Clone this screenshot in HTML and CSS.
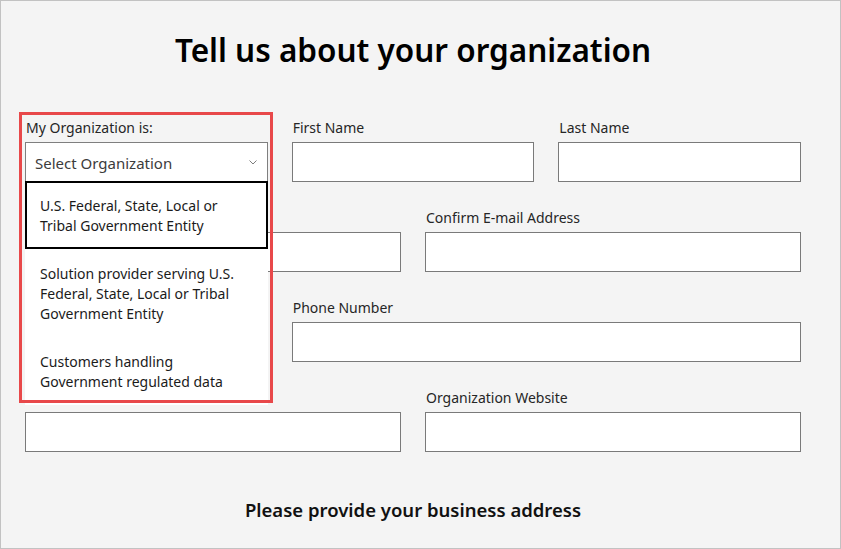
FILE: index.html
```html
<!DOCTYPE html>
<html lang="en">
<head>
<meta charset="utf-8">
<title>Tell us about your organization</title>
<link rel="stylesheet" href="styles.css">
</head>
<body>
<div class="page">
  <div class="form">
    <h1 class="title">Tell us about your organization</h1>
    <div class="grid">
      <div class="field span2 org-field">
        <label class="label">My Organization is:</label>
        <div class="select">
          <span class="select-text">Select Organization</span>
          <svg class="chev" width="8" height="5" viewBox="0 0 8 5"><polyline points="0.5,0.5 4,4 7.5,0.5" fill="none" stroke="#7d7d7d" stroke-width="1"/></svg>
        </div>
        <ul class="menu">
          <li class="item active">U.S. Federal, State, Local or Tribal Government Entity</li>
          <li class="item">Solution provider serving U.S. Federal, State, Local or Tribal Government Entity</li>
          <li class="item">Customers handling Government regulated data</li>
        </ul>
        <div class="highlight"></div>
      </div>
      <div class="field span2">
        <label class="label">First Name</label>
        <div class="input"></div>
      </div>
      <div class="field span2">
        <label class="label">Last Name</label>
        <div class="input"></div>
      </div>

      <div class="field span3">
        <span class="label"></span>
        <div class="input"></div>
      </div>
      <div class="field span3">
        <label class="label">Confirm E-mail Address</label>
        <div class="input"></div>
      </div>

      <div class="field span2">
        <span class="label"></span>
        <div class="input"></div>
      </div>
      <div class="field span4">
        <label class="label">Phone Number</label>
        <div class="input"></div>
      </div>

      <div class="field span3">
        <span class="label"></span>
        <div class="input"></div>
      </div>
      <div class="field span3">
        <label class="label">Organization Website</label>
        <div class="input"></div>
      </div>
    </div>
    <h2 class="subtitle">Please provide your business address</h2>
  </div>
</div>
</body>
</html>
```

FILE: styles.css
```css
* { box-sizing: border-box; }
html, body { margin: 0; padding: 0; }
body {
  font-family: "Noto Sans", "Open Sans", sans-serif;
  color: #1b1b1b;
  background: #f4f4f4;
}
.page {
  width: 841px;
  height: 549px;
  border: 1px solid #c2c2c2;
  background: #f4f4f4;
  padding: 29px 0 0 24px;
  overflow: hidden;
}
.form {
  width: 776px;
}
.title {
  margin: 0;
  text-align: center;
  font-size: 31.5px;
  line-height: 40px;
  font-weight: 600;
  color: #000;
}
.grid {
  margin-top: 48px;
  display: grid;
  grid-template-columns: repeat(6, 1fr);
  column-gap: 24px;
  row-gap: 26px;
}
.field {
  display: flex;
  flex-direction: column;
  gap: 4px;
}
.span2 { grid-column: span 2; }
.span3 { grid-column: span 3; }
.span4 { grid-column: span 4; }
.label {
  display: block;
  height: 20px;
  font-size: 14px;
  line-height: 20px;
  padding-left: 1px;
  color: #262626;
}
.input {
  height: 40px;
  background: #fff;
  border: 1px solid #7a7a7a;
}
.org-field { position: relative; }
.select {
  height: 40px;
  background: #fff;
  border: 1px solid #7f7f7f;
  display: flex;
  align-items: center;
  justify-content: space-between;
  padding: 1px 10px 0 9px;
}
.select-text {
  font-size: 15px;
  color: #3c3c3c;
}
.chev { display: block; }
.menu {
  position: absolute;
  left: 0;
  top: 63px;
  width: 243px;
  margin: 0;
  padding: 0;
  list-style: none;
  background: #fff;
  z-index: 2;
}
.item {
  border: 2px solid transparent;
  padding: 13px 13px 11px;
  font-size: 14px;
  line-height: 20px;
  color: #1b1b1b;
}
.item.active { border-color: #000; }
.highlight {
  position: absolute;
  left: -6px;
  top: -6px;
  width: 254px;
  height: 291px;
  border: 3px solid #e8484a;
  z-index: 3;
  pointer-events: none;
}
.subtitle {
  margin: 45px 0 0;
  text-align: center;
  font-size: 18.5px;
  line-height: 26px;
  font-weight: 600;
  color: #111;
}
```
